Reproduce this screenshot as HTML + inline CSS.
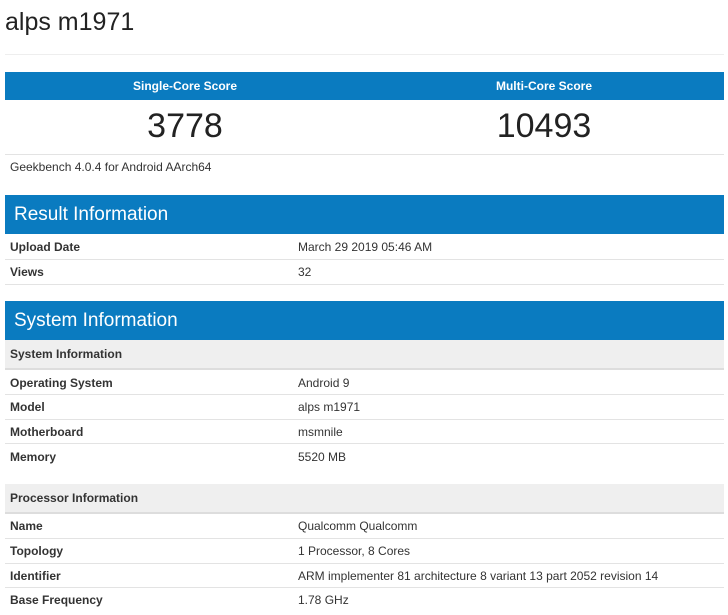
<!DOCTYPE html>
<html><head><style>
body{margin:0;width:728px;height:615px;background:#fff;font-family:"Liberation Sans",sans-serif;color:#333;position:relative;overflow:hidden}
.a{position:absolute}
.t{position:absolute;font-size:12px;white-space:nowrap}
.b{font-weight:bold}
.line{position:absolute;left:5px;width:719px;height:1px;background:#e3e3e3}
.blue{position:absolute;left:5px;width:719px;background:#0a7bc0;color:#fff}
.gray{position:absolute;left:5px;width:719px;background:#efefef}
</style></head><body>
<div class="t" style="left:5px;top:8px;font-size:25px;color:#222">alps m1971</div>
<div class="line" style="top:54px;background:#eee"></div>
<div class="blue" style="top:72px;height:28px"></div>
<div class="t b" style="left:5px;width:360px;text-align:center;top:79px;color:#fff">Single-Core Score</div>
<div class="t b" style="left:364px;width:360px;text-align:center;top:79px;color:#fff">Multi-Core Score</div>
<div class="t" style="left:5px;width:360px;text-align:center;top:107px;font-size:34px;color:#222">3778</div>
<div class="t" style="left:364px;width:360px;text-align:center;top:107px;font-size:34px;color:#222">10493</div>
<div class="line" style="top:154px"></div>
<div class="t" style="left:10px;top:160px">Geekbench 4.0.4 for Android AArch64</div>

<div class="blue" style="top:195px;height:39px"></div>
<div class="t" style="left:14px;top:204px;font-size:19px;color:#fff">Result Information</div>
<div class="t b" style="left:10px;top:240px">Upload Date</div><div class="t" style="left:298px;top:240px">March 29 2019 05:46 AM</div>
<div class="line" style="top:259px"></div>
<div class="t b" style="left:10px;top:265px">Views</div><div class="t" style="left:298px;top:265px">32</div>
<div class="line" style="top:284px"></div>

<div class="blue" style="top:301px;height:39px"></div>
<div class="t" style="left:14px;top:310px;font-size:19px;color:#fff">System Information</div>
<div class="gray" style="top:340px;height:28px"></div>
<div class="line" style="top:368px;height:2px;background:#ddd"></div>
<div class="t b" style="left:10px;top:347px">System Information</div>
<div class="t b" style="left:10px;top:376px">Operating System</div><div class="t" style="left:298px;top:376px">Android 9</div>
<div class="line" style="top:394px"></div>
<div class="t b" style="left:10px;top:400px">Model</div><div class="t" style="left:298px;top:400px">alps m1971</div>
<div class="line" style="top:419px"></div>
<div class="t b" style="left:10px;top:425px">Motherboard</div><div class="t" style="left:298px;top:425px">msmnile</div>
<div class="line" style="top:443px"></div>
<div class="t b" style="left:10px;top:450px">Memory</div><div class="t" style="left:298px;top:450px">5520 MB</div>

<div class="gray" style="top:484px;height:28px"></div>
<div class="line" style="top:512px;height:2px;background:#ddd"></div>
<div class="t b" style="left:10px;top:491px">Processor Information</div>
<div class="t b" style="left:10px;top:519px">Name</div><div class="t" style="left:298px;top:519px">Qualcomm Qualcomm</div>
<div class="line" style="top:538px"></div>
<div class="t b" style="left:10px;top:544px">Topology</div><div class="t" style="left:298px;top:544px">1 Processor, 8 Cores</div>
<div class="line" style="top:563px"></div>
<div class="t b" style="left:10px;top:569px">Identifier</div><div class="t" style="left:298px;top:569px">ARM implementer 81 architecture 8 variant 13 part 2052 revision 14</div>
<div class="line" style="top:587px"></div>
<div class="t b" style="left:10px;top:593px">Base Frequency</div><div class="t" style="left:298px;top:593px">1.78 GHz</div>
</body></html>
